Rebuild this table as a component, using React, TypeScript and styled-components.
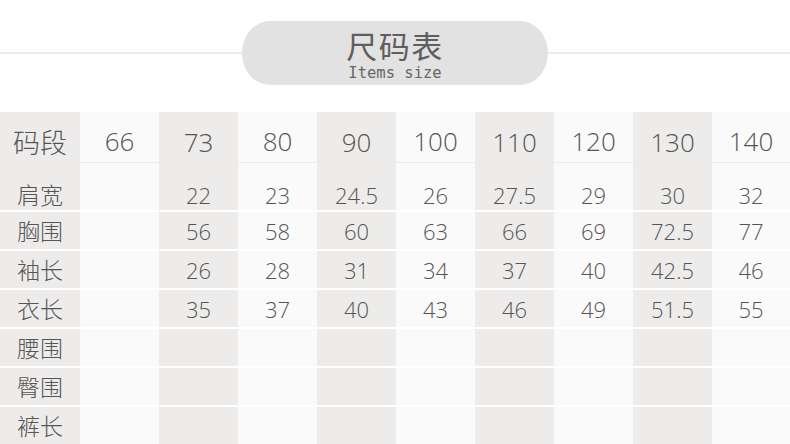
import React from "react";
import styled, { createGlobalStyle } from "styled-components";

const Global = createGlobalStyle`
  html, body { margin: 0; padding: 0; background: #ffffff; }
  body { width: 790px; overflow: hidden; }
`;

const Page = styled.div`
  width: 790px;
  height: 444px;
  background: #ffffff;
  display: flex;
  flex-direction: column;
`;

const Header = styled.div`
  height: 112px;
  flex-shrink: 0;
  display: flex;
  align-items: flex-start;
`;

const Rule = styled.div`
  flex: 1;
  height: 2px;
  margin-top: 52px;
  background: #ebebeb;
`;

const Pill = styled.div`
  margin-top: 21px;
  width: 306px;
  height: 64px;
  box-sizing: border-box;
  padding-top: 9px;
  border-radius: 28px / 32px;
  background: #e2e2e2;
  display: flex;
  flex-direction: column;
  align-items: center;
  color: #5e5e5e;
`;

const Title = styled.div`
  font-family: "Noto Sans CJK SC", sans-serif;
  font-size: 31px;
  line-height: 29px;
  height: 29px;
  letter-spacing: 1.5px;
`;

const Subtitle = styled.div`
  margin-top: 7px;
  font-family: "DejaVu Sans Mono", "Liberation Mono", monospace;
  font-size: 15.5px;
  line-height: 15px;
  height: 15px;
  color: #666;
`;

const Table = styled.div`
  display: grid;
  grid-template-columns: 80px repeat(8, 79px) 78px;
  grid-template-rows: 49px 47px repeat(6, 37px);
  row-gap: 2px;
  background: #ffffff;
`;

const Cell = styled.div<{ $shaded: boolean; $head?: boolean; $first?: boolean; $label?: boolean }>`
  background: ${(p) => (p.$shaded ? "#edeceb" : "#fafafa")};
  display: flex;
  justify-content: center;
  align-items: ${(p) => (p.$first ? "flex-end" : "center")};
  padding-bottom: ${(p) => (p.$first ? "4px" : "0")};
  padding-top: ${(p) => (p.$head ? "8px" : "0")};
  box-sizing: border-box;
  border-bottom: ${(p) => (p.$head && !p.$shaded ? "1px solid #ebebeb" : "none")};
  margin-bottom: ${(p) => (p.$head ? "-2px" : "0")};
  color: #555;
  font-family: ${(p) =>
    p.$label ? `"Noto Sans CJK SC", sans-serif` : `"Open Sans", "Noto Sans", sans-serif`};
  font-size: ${(p) => (p.$head ? (p.$label ? "27px" : "26px") : p.$label ? "23px" : "22px")};
  font-weight: 300;
  line-height: 1;
`;

const sizes = ["66", "73", "80", "90", "100", "110", "120", "130", "140"];
const rows: { label: string; values: string[] }[] = [
  { label: "肩宽", values: ["", "22", "23", "24.5", "26", "27.5", "29", "30", "32"] },
  { label: "胸围", values: ["", "56", "58", "60", "63", "66", "69", "72.5", "77"] },
  { label: "袖长", values: ["", "26", "28", "31", "34", "37", "40", "42.5", "46"] },
  { label: "衣长", values: ["", "35", "37", "40", "43", "46", "49", "51.5", "55"] },
  { label: "腰围", values: ["", "", "", "", "", "", "", "", ""] },
  { label: "臀围", values: ["", "", "", "", "", "", "", "", ""] },
  { label: "裤长", values: ["", "", "", "", "", "", "", "", ""] },
];

const shadedCol = (i: number) => i === 0 || i === 2 || i === 4 || i === 6 || i === 8;

export default function App() {
  return (
    <Page>
      <Global />
      <Header>
        <Rule />
        <Pill>
          <Title>尺码表</Title>
          <Subtitle>Items size</Subtitle>
        </Pill>
        <Rule />
      </Header>
      <Table>
        <Cell $shaded $head $label>码段</Cell>
        {sizes.map((s, i) => (
          <Cell key={s} $shaded={shadedCol(i + 1)} $head>
            {s}
          </Cell>
        ))}
        {rows.map((r, ri) => (
          <React.Fragment key={r.label}>
            <Cell $shaded $label $first={ri === 0}>
              {r.label}
            </Cell>
            {r.values.map((v, i) => (
              <Cell key={i} $shaded={shadedCol(i + 1)} $first={ri === 0}>
                {v}
              </Cell>
            ))}
          </React.Fragment>
        ))}
      </Table>
    </Page>
  );
}
